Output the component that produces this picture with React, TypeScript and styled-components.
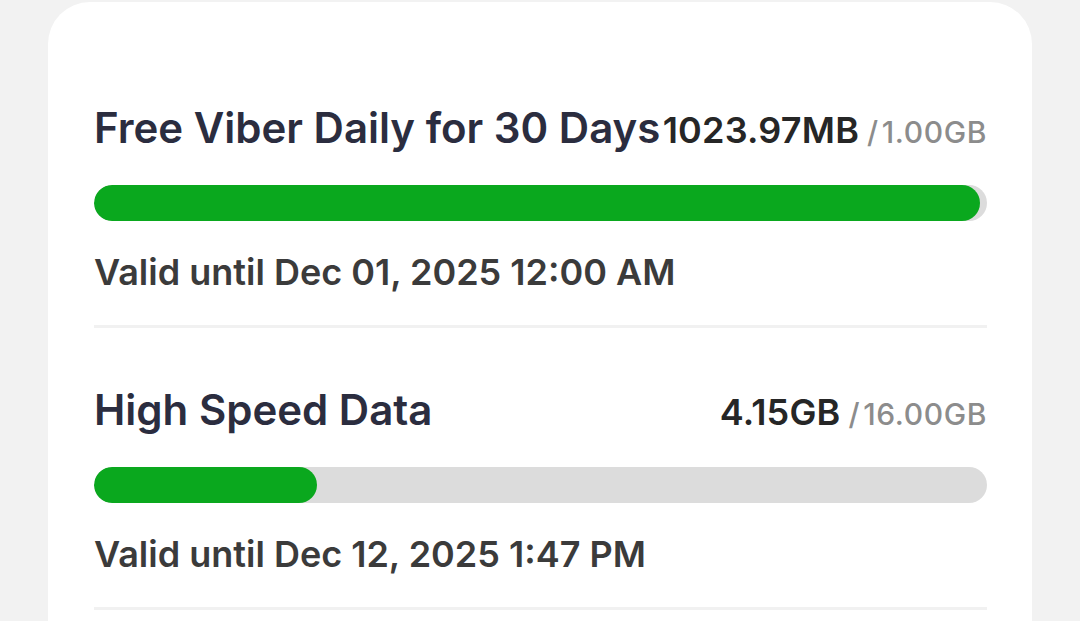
import React from "react";
import styled, { createGlobalStyle } from "styled-components";

const Global = createGlobalStyle`
  html, body { margin: 0; padding: 0; background: #f2f2f2; }
  body { font-family: Inter, "Noto Sans", sans-serif; -webkit-font-smoothing: antialiased; }
`;

const Page = styled.div`
  width: 1080px;
  height: 621px;
  overflow: hidden;
  padding: 2px 48px 0;
  box-sizing: border-box;
`;

const Card = styled.div`
  background: #ffffff;
  border-radius: 42px 42px 0 0;
  padding: 98px 45px 0 46px;
  min-height: 700px;
  box-sizing: border-box;
`;

const Item = styled.div`
  display: flex;
  flex-direction: column;
  padding-bottom: 28px;
  border-bottom: 3px solid #f1f1f1;
  & + & { padding-top: 54px; }
`;

const Header = styled.div`
  display: flex;
  justify-content: space-between;
  align-items: baseline;
  height: 56px;
  line-height: 56px;
`;

const Title = styled.span`
  font-size: 42px;
  font-weight: 600;
  color: #2b2d3f;
  white-space: nowrap;
`;

const Amount = styled.span`
  white-space: nowrap;
`;

const Used = styled.span`
  font-size: 36px;
  font-weight: 600;
  color: #262626;
  letter-spacing: 0.2px;
`;

const Total = styled.span`
  font-size: 30px;
  font-weight: 500;
  color: #8c8c8c;
  margin-left: 8px;
  letter-spacing: 0.6px;
`;

const Slash = styled.span`
  margin-right: 3px;
`;

const Track = styled.div`
  margin-top: 29px;
  height: 36px;
  border-radius: 18px;
  background: #dcdcdc;
  overflow: hidden;
`;

const Fill = styled.div`
  height: 100%;
  background: #0aa81e;
  border-radius: 18px;
`;

const Valid = styled.div`
  margin-top: 26px;
  font-size: 36px;
  line-height: 50px;
  font-weight: 600;
  color: #3b3b3b;
  white-space: nowrap;
`;

const items = [
  { title: "Free Viber Daily for 30 Days", used: "1023.97MB", total: "1.00GB", pct: 99.2, valid: "Valid until Dec 01, 2025 12:00 AM" },
  { title: "High Speed Data", used: "4.15GB", total: "16.00GB", pct: 25, valid: "Valid until Dec 12, 2025 1:47 PM" },
];

export default function App() {
  return (
    <Page>
      <Global />
      <Card>
        {items.map((it) => (
          <Item key={it.title}>
            <Header>
              <Title>{it.title}</Title>
              <Amount>
                <Used>{it.used}</Used>
                <Total>
                  <Slash>/</Slash>
                  {it.total}
                </Total>
              </Amount>
            </Header>
            <Track>
              <Fill style={{ width: `${it.pct}%` }} />
            </Track>
            <Valid>{it.valid}</Valid>
          </Item>
        ))}
      </Card>
    </Page>
  );
}
